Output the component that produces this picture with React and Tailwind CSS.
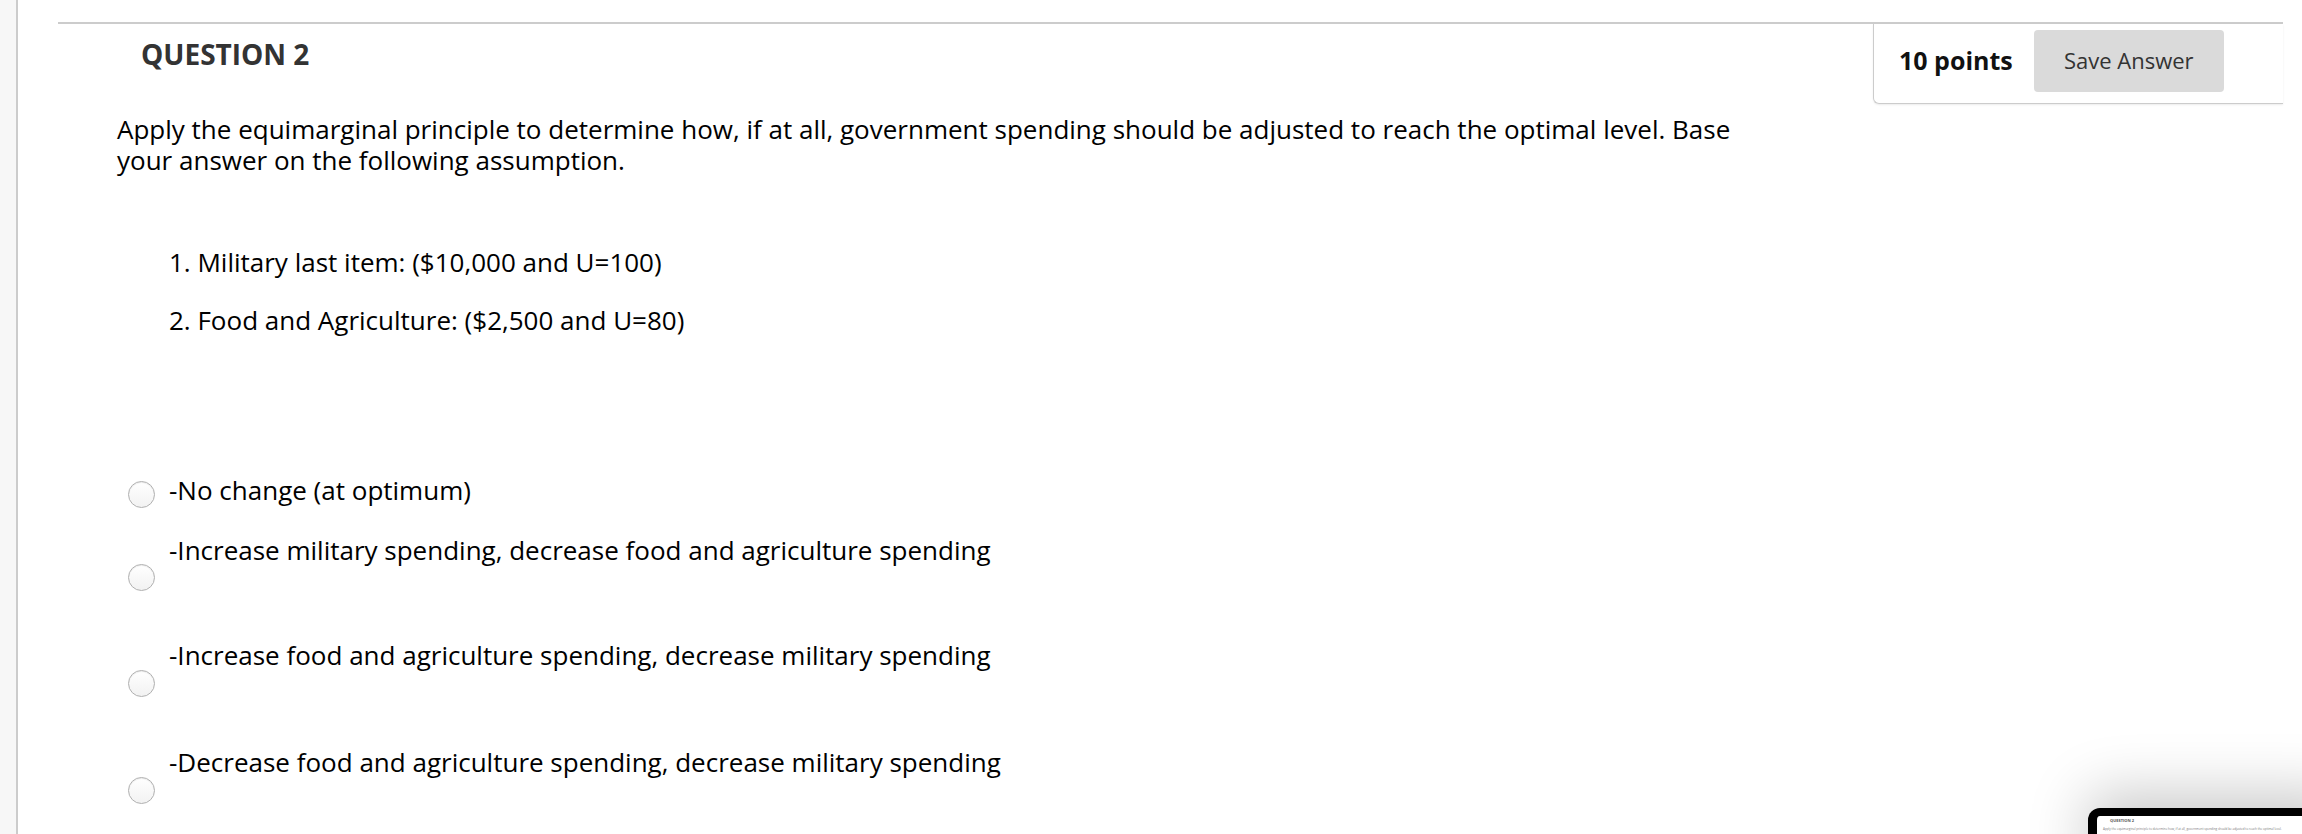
import React from "react";

const options = [
  { label: "-No change (at optimum)", radioTop: "mt-[7px]", row: "mb-[26px]" },
  {
    label: "-Increase military spending, decrease food and agriculture spending",
    radioTop: "mt-[30px]",
    row: "mb-[48px]",
  },
  {
    label: "-Increase food and agriculture spending, decrease military spending",
    radioTop: "mt-[31px]",
    row: "mb-[49px]",
  },
  {
    label: "-Decrease food and agriculture spending, decrease military spending",
    radioTop: "mt-[31px]",
    row: "",
  },
];

function Radio({ className }) {
  return (
    <span
      className={`block w-[27px] h-[27px] shrink-0 rounded-full border border-[#b0b0b0] bg-gradient-to-b from-white to-[#f2f2f2] shadow-[inset_0_1px_1px_rgba(0,0,0,0.08)] ${className}`}
    />
  );
}

function ScreenshotThumb() {
  return (
    <div className="absolute left-[2088px] top-[808px] w-[260px] h-[80px] rounded-tl-[12px] border-t-[8px] border-l-[9px] border-black bg-white shadow-[0_-14px_60px_rgba(0,0,0,0.22)]">
      <div className="pl-[13px] pt-[2px] text-[4px] leading-[6px] text-[#555] font-bold">
        QUESTION 2
      </div>
      <div className="pl-[6px] pt-[3px] text-[3px] leading-[4px] text-[#777] whitespace-nowrap">
        Apply the equimarginal principle to determine how, if at all, government spending should be adjusted to reach the optimal level.
      </div>
    </div>
  );
}

export default function App() {
  return (
    <div className="relative flex w-[2302px] h-[834px] overflow-hidden bg-white font-['Open_Sans',sans-serif] text-black">
      <aside className="w-[18px] shrink-0 bg-[#f7f7f7] border-r-2 border-[#cccccc]" />

      <main className="flex-1 pl-[40px] pr-[19px] pt-[22px]">
        <div className="border-t-2 border-[#cccccc]">
          <div className="flex justify-between items-start">
            <h2 className="mt-[11px] ml-[83px] text-[28px] leading-[38px] font-bold text-[#333333]">
              QUESTION 2
            </h2>

            <div className="flex items-center w-[410px] h-[80px] pl-[25px] pt-[6px] pb-[12px] border-l border-b border-[#cccccc] rounded-bl-[6px] shadow-[0_1px_2px_rgba(0,0,0,0.08)]">
              <span className="text-[25px] font-bold text-[#111111] whitespace-nowrap">
                10 points
              </span>
              <button className="ml-[21px] w-[190px] h-[62px] rounded-[4px] bg-[#dadada] text-[22px] text-[#333333]">
                Save Answer
              </button>
            </div>
          </div>

          <div className="ml-[59px] mt-[10px] w-[1660px] text-[26px] leading-[31px]">
            Apply the equimarginal principle to determine how, if at all,
            government spending should be adjusted to reach the optimal level.
            Base your answer on the following assumption.
          </div>

          <div className="ml-[111px] mt-[70px] text-[26px] leading-[32px]">
            <div>1. Military last item: ($10,000 and U=100)</div>
            <div className="mt-[26px]">2. Food and Agriculture: ($2,500 and U=80)</div>
          </div>

          <div className="ml-[70px] mt-[138px]">
            {options.map((o) => (
              <div key={o.label} className={`flex items-start ${o.row}`}>
                <Radio className={o.radioTop} />
                <span className="ml-[14px] text-[26px] leading-[32px] whitespace-nowrap">
                  {o.label}
                </span>
              </div>
            ))}
          </div>
        </div>
      </main>

      <ScreenshotThumb />
    </div>
  );
}
